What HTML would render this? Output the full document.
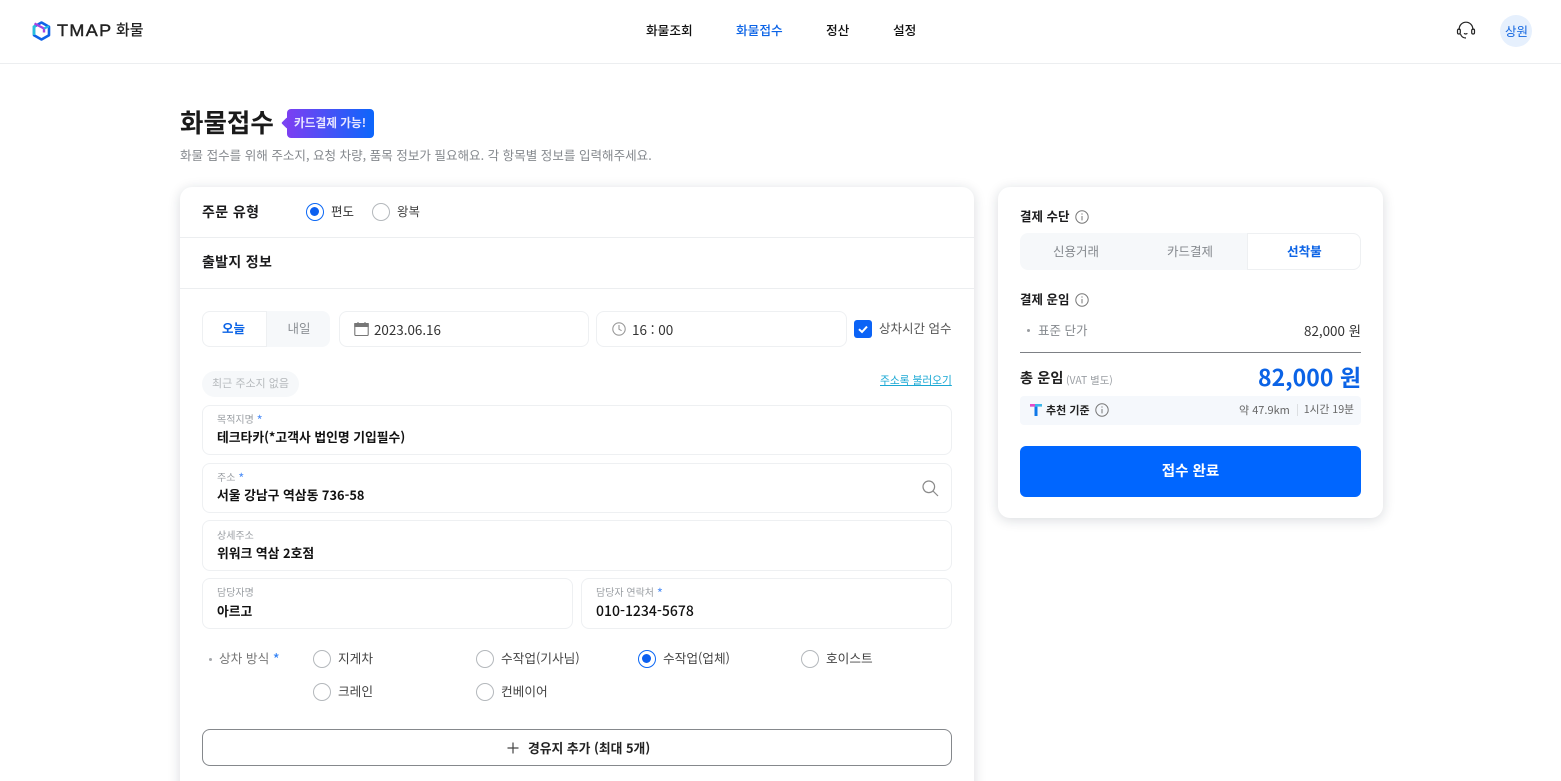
<!DOCTYPE html>
<html lang="ko"><head><meta charset="utf-8"><title>TMAP 화물</title>
<style>
*{box-sizing:border-box;margin:0;padding:0}
html,body{width:1561px;height:781px;overflow:hidden;background:#fff}
body{position:relative;font-family:"Noto Sans CJK KR","Liberation Sans",sans-serif;color:#1c1c1e}
.t{position:absolute;white-space:nowrap;line-height:20px;height:20px}
.b{font-weight:700}
.m{font-weight:500}
.box{position:absolute;background:#fff;border:1px solid #eef0f2;border-radius:8px}
.lb{font-size:10px;color:#9a9ea3;line-height:14px;height:14px}
.val{font-size:12.8px;font-weight:700;color:#111}
.num{font-size:14px;font-weight:500}
.o{font-size:12.7px;color:#444}
.r{position:absolute;width:18px;height:18px;border-radius:50%;border:1px solid #b4b8bc;background:#fff}
.r.on{border:1.5px solid #0b67f5}
.r.on:after{content:"";position:absolute;left:3px;top:3px;width:9px;height:9px;border-radius:50%;background:#0b5ff0}
.card{position:absolute;background:#fff;border-radius:12px;box-shadow:0 2px 12px rgba(20,30,50,.16)}
.ln{position:absolute;height:1px;background:#eceef0}
.s{color:#4f8ff7;font-size:13px;position:relative;top:2px;line-height:0}
svg{position:absolute;overflow:visible}
</style></head><body>

<div class="ln" style="left:0;top:63px;width:1561px"></div>
<svg style="left:32px;top:21px" width="19" height="20" viewBox="0 0 19 20" fill="none"><path d="M9.5 1.5L17 5.7v8.6L9.5 18.5 2 14.3V5.7z" stroke="#0f62e8" stroke-width="2.6" stroke-linejoin="round"/><path d="M2 14V5.7L4 4.6" stroke="#27c0dc" stroke-width="2.6"/><path d="M2.5 2.5L12 7.5v4" stroke="#a344e0" stroke-width="2.4" stroke-linejoin="round"/><path d="M12 7.5l5-2.2" stroke="#27b7e8" stroke-width="2.2"/></svg>
<div class="t" style="left:57px;top:21px;font-size:17px;font-family:'Liberation Sans',sans-serif;letter-spacing:1.3px;color:#222;-webkit-text-stroke:.4px #222;transform:scaleX(1.06);transform-origin:left">TMAP</div>
<div class="t m" style="left:116px;top:20px;font-size:15px;color:#222">화물</div>

<div class="t m" style="left:646px;top:20px;font-size:12.7px;color:#111">화물조회</div>
<div class="t m" style="left:736px;top:20px;font-size:12.7px;color:#0b63e6">화물접수</div>
<div class="t m" style="left:826px;top:20px;font-size:12.7px;color:#111">정산</div>
<div class="t m" style="left:893px;top:20px;font-size:12.7px;color:#111">설정</div>

<svg style="left:1456px;top:21px" width="20" height="20" viewBox="0 0 20 20" fill="none" stroke="#222" stroke-width="1.2"><path d="M3.2 9V8a6.8 6.8 0 0 1 13.6 0v1"/><rect x="1.5" y="8" width="2.8" height="5" rx="1.4"/><rect x="15.7" y="8" width="2.8" height="5" rx="1.4"/><path d="M4.5 13c.8 2.6 2.6 4 5.5 4"/><path d="M8 12.4c1 .7 2.4.7 3.4 0"/></svg>
<div style="position:absolute;left:1500px;top:15px;width:32px;height:32px;border-radius:50%;background:#e6f0fd"></div>
<div class="t" style="left:1505px;top:21px;font-size:12.5px;color:#1467e0">상원</div>

<div class="t b" style="left:180px;top:106px;font-size:25.5px;height:32px;line-height:32px;color:#1a1a1a">화물접수</div>
<div style="position:absolute;left:283px;top:119px;width:8px;height:8px;background:#7a45f2;transform:rotate(45deg);border-radius:1px"></div>
<div style="position:absolute;left:287px;top:109px;width:87px;height:29px;border-radius:4px;background:linear-gradient(90deg,#7c3ff2,#0c66fb)"></div>
<div class="t b" style="left:294px;top:113px;font-size:11.7px;color:#e9e6ff">카드결제 가능!</div>
<div class="t" style="left:180px;top:145px;font-size:12.55px;color:#85898e">화물 접수를 위해 주소지, 요청 차량, 품목 정보가 필요해요. 각 항목별 정보를 입력해주세요.</div>

<!-- left card -->
<div class="card" style="left:180px;top:187px;width:794px;height:640px"></div>
<div class="t b" style="left:202px;top:202px;font-size:14px;letter-spacing:.4px">주문 유형</div>
<div class="r on" style="left:306px;top:203px"></div>
<div class="t" style="left:331px;top:201px;font-size:12.5px;color:#333">편도</div>
<div class="r" style="left:372px;top:203px"></div>
<div class="t" style="left:397px;top:201px;font-size:12.5px;color:#444">왕복</div>
<div class="ln" style="left:180px;top:237px;width:794px"></div>
<div class="t b" style="left:202px;top:252px;font-size:14px;letter-spacing:.3px">출발지 정보</div>
<div class="ln" style="left:180px;top:288px;width:794px"></div>

<div style="position:absolute;left:202px;top:311px;width:128px;height:36px;background:#f6f8fa;border-radius:8px"></div>
<div class="box" style="left:202px;top:311px;width:65px;height:36px;border-radius:8px 0 0 8px"></div>
<div class="t b" style="left:222px;top:318px;font-size:12.5px;color:#0b63e6">오늘</div>
<div class="t" style="left:287.5px;top:318px;font-size:12.5px;color:#8b8f94">내일</div>

<div class="box" style="left:339px;top:311px;width:250px;height:36px"></div>
<svg style="left:354px;top:322px" width="15" height="15" viewBox="0 0 15 15" fill="none" stroke="#777" stroke-width="1.1"><rect x=".8" y="1.5" width="13.4" height="12" rx="1"/><path d="M.8 1.5h13.4v3H.8z" fill="#777"/><path d="M4 0v2M11 0v2"/></svg>
<div class="t" style="left:374px;top:319px;font-size:13.4px;color:#333">2023.06.16</div>

<div class="box" style="left:596px;top:311px;width:251px;height:36px"></div>
<svg style="left:612px;top:322px" width="14" height="14" viewBox="0 0 14 14" fill="none" stroke="#999" stroke-width="1.1"><circle cx="7" cy="7" r="6.2"/><path d="M7 3v4.2l2.6 1.5"/></svg>
<div class="t" style="left:632px;top:319px;font-size:13.5px;color:#333">16 : 00</div>

<div style="position:absolute;left:854px;top:320px;width:18px;height:18px;border-radius:3px;background:#0b63f6"></div>
<svg style="left:854px;top:320px" width="18" height="18" viewBox="0 0 18 18" fill="none" stroke="#fff" stroke-width="2"><path d="M5 9.2l3 2.8 5-5.4"/></svg>
<div class="t" style="left:879px;top:318px;font-size:12.5px;color:#555">상차시간 엄수</div>

<div style="position:absolute;left:202px;top:371px;width:97px;height:26px;border-radius:13px;background:#f6f8fa"></div>
<div class="t" style="left:212px;top:373px;font-size:11px;color:#b6babd">최근 주소지 없음</div>
<div class="t" style="left:880px;top:371px;font-size:10.7px;color:#1aa8d4;text-decoration:underline">주소록 불러오기</div>

<div class="box" style="left:202px;top:405px;width:750px;height:50px"></div>
<div class="t lb" style="left:217px;top:412px">목적지명 <span class="s">*</span></div>
<div class="t val" style="left:217px;top:427px">테크타카(*고객사 법인명 기입필수)</div>

<div class="box" style="left:202px;top:463px;width:750px;height:50px"></div>
<div class="t lb" style="left:217px;top:470px">주소 <span class="s">*</span></div>
<div class="t val" style="left:217px;top:485px">서울 강남구 역삼동 736-58</div>
<svg style="left:922px;top:480px" width="16" height="16" viewBox="0 0 16 16" fill="none" stroke="#8a8a8a" stroke-width="1.2"><circle cx="6.8" cy="6.8" r="5.8"/><path d="M11 11l5 5"/></svg>

<div class="box" style="left:202px;top:520px;width:750px;height:51px"></div>
<div class="t lb" style="left:217px;top:528px">상세주소</div>
<div class="t val" style="left:217px;top:543px">위워크 역삼 2호점</div>

<div class="box" style="left:202px;top:578px;width:371px;height:51px"></div>
<div class="t lb" style="left:217px;top:585px">담당자명</div>
<div class="t val" style="left:217px;top:601px">아르고</div>

<div class="box" style="left:581px;top:578px;width:371px;height:51px"></div>
<div class="t lb" style="left:596px;top:585px">담당자 연락처 <span class="s">*</span></div>
<div class="t num" style="left:596px;top:601px;color:#111">010-1234-5678</div>

<div style="position:absolute;left:209px;top:658px;width:3px;height:3px;border-radius:50%;background:#a5a8ac"></div>
<div class="t" style="left:219px;top:648px;font-size:12.7px;color:#777">상차 방식 <span class="s" style="color:#2f80f5;font-size:15px">*</span></div>
<div class="r" style="left:313px;top:650px"></div><div class="t o" style="left:338px;top:648px">지게차</div>
<div class="r" style="left:476px;top:650px"></div><div class="t o" style="left:501px;top:648px">수작업(기사님)</div>
<div class="r on" style="left:638px;top:650px"></div><div class="t o" style="left:663px;top:648px">수작업(업체)</div>
<div class="r" style="left:801px;top:650px"></div><div class="t o" style="left:826px;top:648px">호이스트</div>
<div class="r" style="left:313px;top:683px"></div><div class="t o" style="left:338px;top:681px">크레인</div>
<div class="r" style="left:476px;top:683px"></div><div class="t o" style="left:501px;top:681px">컨베이어</div>

<div class="box" style="left:202px;top:729px;width:750px;height:37px;border-color:#85888c"></div>
<svg style="left:507px;top:742px" width="12" height="12" viewBox="0 0 12 12" stroke="#444" stroke-width="1.2"><path d="M6 .5v11M.5 6h11"/></svg>
<div class="t b" style="left:528px;top:738px;font-size:12.8px;color:#222">경유지 추가 (최대 5개)</div>

<!-- right card -->
<div class="card" style="left:998px;top:187px;width:385px;height:331px"></div>
<div class="t b" style="left:1020px;top:206px;font-size:12.5px">결제 수단</div>
<svg style="left:1075px;top:210px" width="14" height="14" viewBox="0 0 14 14" fill="none" stroke="#777" stroke-width="1"><circle cx="7" cy="7" r="6.2"/><path d="M7 6v4.4M7 3.4v1.2"/></svg>
<div style="position:absolute;left:1020px;top:233px;width:341px;height:37px;border-radius:8px;background:#f6f8fa"></div>
<div class="box" style="left:1247px;top:233px;width:114px;height:37px;border-radius:0 8px 8px 0"></div>
<div class="t" style="left:1053px;top:241px;font-size:12.5px;color:#85898e">신용거래</div>
<div class="t" style="left:1167px;top:241px;font-size:12.5px;color:#85898e">카드결제</div>
<div class="t b" style="left:1287px;top:241px;font-size:12.6px;color:#0b63e6">선착불</div>

<div class="t b" style="left:1020px;top:289px;font-size:12.5px">결제 운임</div>
<svg style="left:1075px;top:293px" width="14" height="14" viewBox="0 0 14 14" fill="none" stroke="#777" stroke-width="1"><circle cx="7" cy="7" r="6.2"/><path d="M7 6v4.4M7 3.4v1.2"/></svg>
<div style="position:absolute;left:1027px;top:329px;width:3px;height:3px;border-radius:50%;background:#9a9da1"></div>
<div class="t" style="left:1038px;top:320px;font-size:12.5px;color:#85898e">표준 단가</div>
<div class="t" style="right:200px;top:320px;font-size:13.4px;color:#333">82,000 원</div>
<div class="ln" style="left:1020px;top:352px;width:341px;background:#7d8085"></div>

<div class="t b" style="left:1020px;top:368px;font-size:14.2px;letter-spacing:.1px;color:#222">총 운임</div>
<div class="t" style="left:1066px;top:370px;font-size:10.4px;color:#9a9ea3">(VAT 별도)</div>
<div class="t b" style="right:200px;top:361px;font-size:23px;height:30px;line-height:30px;color:#0b63e6">82,000 원</div>

<div style="position:absolute;left:1020px;top:396px;width:341px;height:29px;border-radius:4px;background:#f5f8fc"></div>
<svg style="left:1030px;top:404px" width="12" height="12" viewBox="0 0 12 12"><path d="M0 0h12v2.6H0z" fill="#3bb6ea"/><path d="M0 0h5v2.6H0z" fill="#e24ac8"/><path d="M4.5 2.6h3V12h-3z" fill="#0f78e8"/></svg>
<div class="t b" style="left:1046px;top:400px;font-size:11px;color:#222">추천 기준</div>
<svg style="left:1095px;top:403px" width="14" height="14" viewBox="0 0 14 14" fill="none" stroke="#777" stroke-width="1"><circle cx="7" cy="7" r="6.2"/><path d="M7 6v4.4M7 3.4v1.2"/></svg>
<div class="t" style="left:1239px;top:400px;font-size:11px;color:#666">약 47.9km</div>
<div style="position:absolute;left:1297px;top:404px;width:1px;height:12px;background:#dcdfe2"></div>
<div class="t" style="right:207px;top:400px;font-size:10.7px;color:#666">1시간 19분</div>

<div style="position:absolute;left:1020px;top:446px;width:341px;height:51px;border-radius:6px;background:#0066ff"></div>
<div class="t b" style="left:1020px;top:461px;width:341px;text-align:center;font-size:14.5px;color:#fff">접수 완료</div>

</body></html>
